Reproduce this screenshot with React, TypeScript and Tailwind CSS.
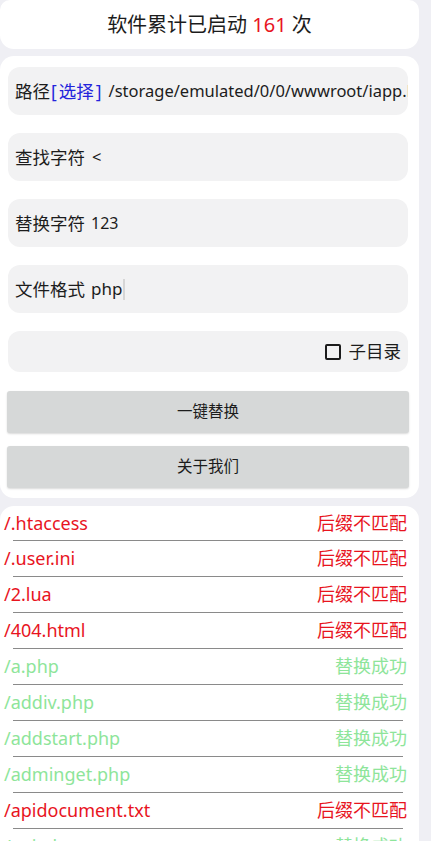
import React from "react";

const rows: { name: string; ok: boolean }[] = [
  { name: "/.htaccess", ok: false },
  { name: "/.user.ini", ok: false },
  { name: "/2.lua", ok: false },
  { name: "/404.html", ok: false },
  { name: "/a.php", ok: true },
  { name: "/addiv.php", ok: true },
  { name: "/addstart.php", ok: true },
  { name: "/adminget.php", ok: true },
  { name: "/apidocument.txt", ok: false },
  { name: "/api.php", ok: true },
  { name: "/app.php", ok: true },
];

const font = { fontFamily: '"Noto Sans", "Noto Sans CJK SC", sans-serif' };

export default function App() {
  return (
    <div className="min-h-screen w-[431px] bg-[#efeff4] pr-[12px] text-[#1c1c1c]" style={font}>
      <div className="flex h-[49px] items-center justify-center rounded-b-[14px] rounded-t-[10px] bg-white text-[20px]">
        <span>
          软件累计已启动 <span className="text-[#e8141e]">161</span> 次
        </span>
      </div>

      <div className="mt-[7px] flex flex-col rounded-[14px] bg-white pb-[10px] pt-[11px]">
        <div className="ml-[8px] mr-[11px] flex h-[48px] items-center overflow-hidden whitespace-nowrap rounded-[12px] bg-[#f2f2f3] pl-[7px] text-[17.5px]">
          <span>路径</span>
          <span className="text-[#2323dc]">
            <span className="ml-[1px] mr-[2px]">[</span>选择<span className="ml-[2px]">]</span>
          </span>
          <span className="ml-[7px] text-[16.5px]">/storage/emulated/0/0/wwwroot/iapp.lua</span>
        </div>
        <div className="ml-[8px] mr-[11px] mt-[18px] flex h-[48px] items-center rounded-[12px] bg-[#f2f2f3] pl-[7px] text-[17.5px]">
          <span>查找字符</span>
          <span className="ml-[7px] text-[16.5px]">&lt;</span>
        </div>
        <div className="ml-[8px] mr-[11px] mt-[18px] flex h-[48px] items-center rounded-[12px] bg-[#f2f2f3] pl-[7px] text-[17.5px]">
          <span>替换字符</span>
          <span className="ml-[6px] text-[16px]">123</span>
        </div>
        <div className="ml-[8px] mr-[11px] mt-[18px] flex h-[48px] items-center rounded-[12px] bg-[#f2f2f3] pl-[7px] text-[17.5px]">
          <span>文件格式</span>
          <span className="ml-[6px] text-[17px]">php</span>
          <span className="ml-[1px] h-[21px] w-[2px] bg-[#d6d6d6]" />
        </div>
        <div className="ml-[8px] mr-[11px] mt-[18px] flex h-[41px] items-center justify-end rounded-[12px] bg-[#f2f2f3] pr-[7px] text-[17.5px]">
          <span className="h-[16px] w-[16px] rounded-[2px] border-2 border-[#1c1c1c]" />
          <span className="ml-[8px]">子目录</span>
        </div>
        <button className="ml-[7px] mr-[10px] mt-[19px] flex h-[42px] items-center justify-center rounded-[3px] bg-[#d6d8d8] text-[15.5px] text-[#1c1c1c] shadow-[0_1px_2px_rgba(0,0,0,0.15)]">
          一键替换
        </button>
        <button className="ml-[7px] mr-[10px] mt-[13px] flex h-[42px] items-center justify-center rounded-[3px] bg-[#d6d8d8] text-[15.5px] text-[#1c1c1c] shadow-[0_1px_2px_rgba(0,0,0,0.15)]">
          关于我们
        </button>
      </div>

      <div className="mt-[8px] flex flex-col rounded-t-[14px] bg-white">
        {rows.map((r, i) => (
          <div key={r.name} className="flex flex-col">
            <div
              className={`flex items-center justify-between pl-[4px] pr-[12px] text-[18px] ${
                i === 0 ? "h-[34px]" : "h-[35px]"
              } ${r.ok ? "text-[#8ee59a]" : "text-[#e8141e]"}`}
            >
              <span>{r.name}</span>
              <span>{r.ok ? "替换成功" : "后缀不匹配"}</span>
            </div>
            <div className="ml-[13px] mr-[16px] h-px bg-[#8a8a8a]" />
          </div>
        ))}
      </div>
    </div>
  );
}
